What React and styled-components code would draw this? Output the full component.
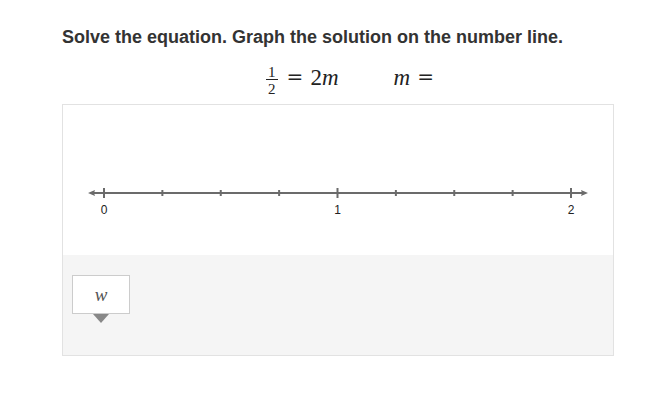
import React from 'react'
import styled, { createGlobalStyle } from 'styled-components'

const GlobalStyle = createGlobalStyle`
  body {
    margin: 0;
    background: #fff;
    font-family: "Liberation Sans", Arial, sans-serif;
  }
`

const Page = styled.div`
  padding: 26px 32px 0 62px;
  width: 552px;
`

const Title = styled.h1`
  margin: 0;
  font-size: 18px;
  font-weight: bold;
  color: #333;
  line-height: 22px;
`

const MathRow = styled.div`
  display: flex;
  justify-content: center;
  align-items: center;
  gap: 55px;
  height: 42px;
  margin: 9px 0 5px;
  padding-left: 24px;
  font-family: "Liberation Serif", "Times New Roman", serif;
  font-size: 23px;
  color: #222;
`

const Expr = styled.span`
  display: inline-flex;
  align-items: center;
  gap: 7px;
`

const Var = styled.i`
  font-style: italic;
`

const Eq = styled.span`
  font-family: "DejaVu Serif", serif;
  font-size: 20px;
  position: relative;
  top: -1px;
`

const Frac = styled.span`
  display: inline-flex;
  flex-direction: column;
  align-items: center;
  font-size: 15px;
  line-height: 14px;
  margin-right: 2px;
  position: relative;
  top: 2px;
  span + span {
    border-top: 1px solid #222;
    padding: 2px 2px 0;
  }
`

const Panel = styled.div`
  border: 1px solid #e2e2e2;
  display: flex;
  flex-direction: column;
`

const Graph = styled.div`
  height: 150px;
  background: #fff;
`

const Tray = styled.div`
  height: 100px;
  background: #f5f5f5;
  padding: 20px 9px;
  box-sizing: border-box;
`

const Token = styled.div`
  position: relative;
  width: 56px;
  height: 37px;
  background: #fff;
  border: 1px solid #ccc;
  display: flex;
  align-items: center;
  justify-content: center;
  font-family: "Liberation Serif", "Times New Roman", serif;
  font-style: italic;
  font-size: 19px;
  color: #555;
  &::after {
    content: '';
    position: absolute;
    left: 20px;
    top: 38px;
    border-left: 8px solid transparent;
    border-right: 8px solid transparent;
    border-top: 9px solid #888;
  }
`

const ticks = Array.from({ length: 9 }, (_, i) => i)

function NumberLine() {
  const x0 = 41
  const step = 58.375
  const y = 88
  return (
    <svg width="550" height="150" viewBox="0 0 550 150">
      <line x1={28} y1={y} x2={522} y2={y} stroke="#6b6b6b" strokeWidth="2" />
      <polygon points={`25,${y} 32,${y - 3} 31,${y} 32,${y + 3}`} fill="#6b6b6b" />
      <polygon points={`525,${y} 518,${y - 3} 519,${y} 518,${y + 3}`} fill="#6b6b6b" />
      {ticks.map(i => {
        const x = x0 + i * step
        const major = i % 4 === 0
        return (
          <line
            key={i}
            x1={x}
            x2={x}
            y1={y - (major ? 5 : 3)}
            y2={y + (major ? 5 : 3)}
            stroke="#6b6b6b"
            strokeWidth="2"
          />
        )
      })}
      {[0, 1, 2].map(n => (
        <text
          key={n}
          x={x0 + n * 4 * step}
          y={y + 21}
          textAnchor="middle"
          fontFamily="Liberation Sans, Arial, sans-serif"
          fontSize="12"
          fill="#222"
        >
          {n}
        </text>
      ))}
    </svg>
  )
}

export default function App() {
  return (
    <>
      <GlobalStyle />
      <Page>
        <Title>Solve the equation. Graph the solution on the number line.</Title>
        <MathRow>
          <Expr>
            <Frac>
              <span>1</span>
              <span>2</span>
            </Frac>
            <Eq>=</Eq>
            <span>
              2<Var>m</Var>
            </span>
          </Expr>
          <Expr>
            <Var>m</Var>
            <Eq>=</Eq>
          </Expr>
        </MathRow>
        <Panel>
          <Graph>
            <NumberLine />
          </Graph>
          <Tray>
            <Token>w</Token>
          </Tray>
        </Panel>
      </Page>
    </>
  )
}
